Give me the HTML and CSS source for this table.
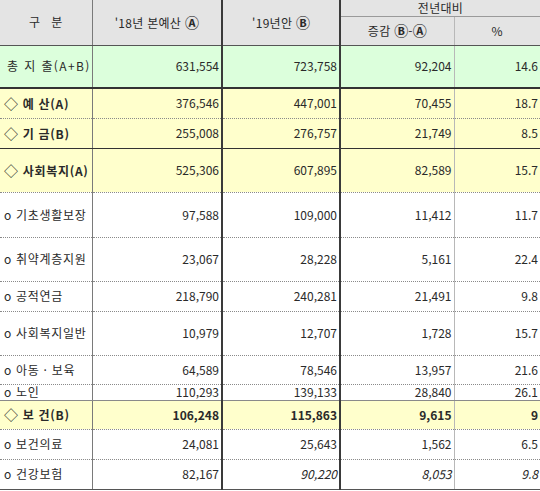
FILE: index.html
```html
<!DOCTYPE html>
<html lang="ko">
<head>
<meta charset="utf-8">
<link rel="stylesheet" href="styles.css">
</head>
<body>
<table class="budget">
  <colgroup>
    <col class="c1"><col class="c2"><col class="c3"><col class="c4"><col class="c5">
  </colgroup>
  <thead>
    <tr class="h1">
      <th rowspan="2" class="sep-grey">구&nbsp;&nbsp; 분</th>
      <th rowspan="2" class="sep-dark">'18년 본예산 <span class="circ">Ⓐ</span></th>
      <th rowspan="2" class="sep-dark">'19년안 <span class="circ">Ⓑ</span></th>
      <th colspan="2" class="top-span">전년대비</th>
    </tr>
    <tr class="h2">
      <th class="sep-light">증감 <span class="circ">Ⓑ</span>-<span class="circ">Ⓐ</span></th>
      <th>%</th>
    </tr>
  </thead>
  <tbody>
    <tr class="total r-total">
      <td class="label wide sep-grey">총 지 출(A+B)</td>
      <td class="num sep-dark">631,554</td>
      <td class="num sep-dark">723,758</td>
      <td class="num sep-light">92,204</td>
      <td class="num">14.6</td>
    </tr>
    <tr class="sub r-yesan dotted">
      <td class="label strong sep-grey"><span class="dia">◇</span> 예 산(A)</td>
      <td class="num sep-dark">376,546</td>
      <td class="num sep-dark">447,001</td>
      <td class="num sep-light">70,455</td>
      <td class="num">18.7</td>
    </tr>
    <tr class="sub r-gigeum solid-dark">
      <td class="label strong sep-grey"><span class="dia">◇</span> 기 금(B)</td>
      <td class="num sep-dark">255,008</td>
      <td class="num sep-dark">276,757</td>
      <td class="num sep-light">21,749</td>
      <td class="num">8.5</td>
    </tr>
    <tr class="sub r-welfare dotted">
      <td class="label strong sep-grey"><span class="dia">◇</span> 사회복지(A)</td>
      <td class="num sep-dark">525,306</td>
      <td class="num sep-dark">607,895</td>
      <td class="num sep-light">82,589</td>
      <td class="num">15.7</td>
    </tr>
    <tr class="item r-45 dotted">
      <td class="label sep-grey">o 기초생활보장</td>
      <td class="num sep-dark">97,588</td>
      <td class="num sep-dark">109,000</td>
      <td class="num sep-light">11,412</td>
      <td class="num">11.7</td>
    </tr>
    <tr class="item r-44 dotted">
      <td class="label sep-grey">o 취약계층지원</td>
      <td class="num sep-dark">23,067</td>
      <td class="num sep-dark">28,228</td>
      <td class="num sep-light">5,161</td>
      <td class="num">22.4</td>
    </tr>
    <tr class="item r-30 dotted">
      <td class="label sep-grey">o 공적연금</td>
      <td class="num sep-dark">218,790</td>
      <td class="num sep-dark">240,281</td>
      <td class="num sep-light">21,491</td>
      <td class="num">9.8</td>
    </tr>
    <tr class="item r-44 dotted">
      <td class="label sep-grey">o 사회복지일반</td>
      <td class="num sep-dark">10,979</td>
      <td class="num sep-dark">12,707</td>
      <td class="num sep-light">1,728</td>
      <td class="num">15.7</td>
    </tr>
    <tr class="item r-29 dotted">
      <td class="label sep-grey">o 아동 · 보육</td>
      <td class="num sep-dark">64,589</td>
      <td class="num sep-dark">78,546</td>
      <td class="num sep-light">13,957</td>
      <td class="num">21.6</td>
    </tr>
    <tr class="item r-16 solid-grey">
      <td class="label sep-grey">o 노인</td>
      <td class="num sep-dark">110,293</td>
      <td class="num sep-dark">139,133</td>
      <td class="num sep-light">28,840</td>
      <td class="num">26.1</td>
    </tr>
    <tr class="sub r-29 dotted">
      <td class="label strong sep-grey"><span class="dia">◇</span> 보 건(B)</td>
      <td class="num bold sep-dark">106,248</td>
      <td class="num bold sep-dark">115,863</td>
      <td class="num bold sep-light">9,615</td>
      <td class="num bold">9</td>
    </tr>
    <tr class="item r-30 dotted">
      <td class="label sep-grey">o 보건의료</td>
      <td class="num sep-dark">24,081</td>
      <td class="num sep-dark">25,643</td>
      <td class="num sep-light">1,562</td>
      <td class="num">6.5</td>
    </tr>
    <tr class="item r-30 last">
      <td class="label sep-grey">o 건강보험</td>
      <td class="num sep-dark">82,167</td>
      <td class="num it sep-dark">90,220</td>
      <td class="num it sep-light">8,053</td>
      <td class="num it">9.8</td>
    </tr>
  </tbody>
</table>
</body>
</html>
```

FILE: styles.css
```css
html, body {
  margin: 0;
  padding: 0;
  background: #ffffff;
}

.budget {
  width: 540px;
  table-layout: fixed;
  border-collapse: collapse;
  font-family: "Noto Sans CJK KR", "Noto Sans", sans-serif;
  font-size: 12px;
  color: #2a2a2a;
}

.c1 { width: 92px; }
.c2 { width: 130px; }
.c3 { width: 118px; }
.c4 { width: 114px; }
.c5 { width: 86px; }

th, td {
  padding: 0;
  vertical-align: middle;
  white-space: nowrap;
  line-height: 14px;
}

thead th {
  background: #e4e4e4;
  font-weight: normal;
  text-align: center;
  border-bottom: 1px solid #555;
  letter-spacing: 0.3px;
}

.circ {
  font-size: 14px;
  font-weight: 700;
  letter-spacing: 0;
}

.h1 { height: 16px; }
.h2 { height: 29px; }

.top-span {
  border-bottom: 1px solid #9a9a9a;
}

.sep-grey { border-right: 1px solid #7a7a7a; }
.sep-dark { border-right: 2px solid #3a3a3a; }
.sep-light { border-right: 1px solid #b8b8b8; }

.total td { background: #dcffdc; }
.sub td { background: #ffffcc; }
.item td { background: #ffffff; }

.r-total { height: 43px; }
.r-total td { border-bottom: 2px solid #333; }
.r-yesan { height: 30px; }
.r-gigeum { height: 30px; }
.r-welfare { height: 44px; }
.r-45 { height: 45px; }
.r-44 { height: 44px; }
.r-30 { height: 30px; }
.r-29 { height: 29px; }
.r-16 { height: 16px; }

.dotted td { border-bottom: 1px dotted #8a8a8a; }
.solid-dark td { border-bottom: 1px solid #333; }
.solid-grey td { border-bottom: 1px solid #8a8a8a; }
.last td { border-bottom: 1px solid #555; }

.label {
  text-align: left;
  padding-left: 4px;
  letter-spacing: 0.7px;
}

.total .label {
  padding-left: 7px;
  letter-spacing: 1.4px;
}

.strong { font-weight: 600; }

.dia {
  font-size: 14px;
  font-weight: 400;
}

.num {
  text-align: right;
  padding-right: 2px;
}

.bold { font-weight: 700; }
.it { font-style: italic; }
```
